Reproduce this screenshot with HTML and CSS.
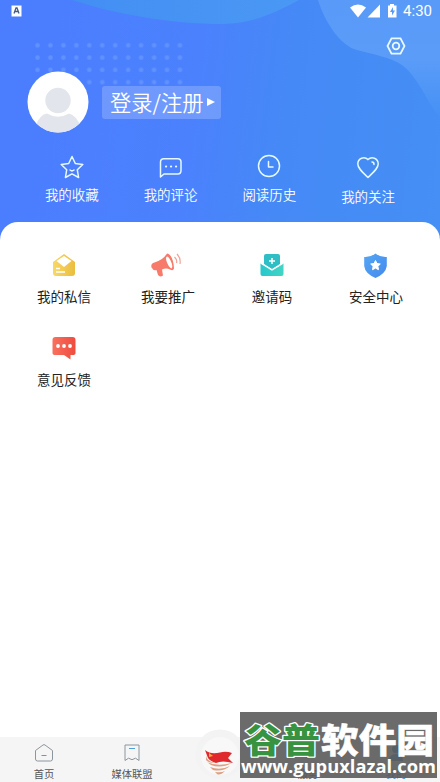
FILE: index.html
```html
<!DOCTYPE html>
<html lang="zh-CN">
<head>
<meta charset="utf-8">
<title>我的</title>
<link rel="stylesheet" href="styles.css">
</head>
<body>
<div class="app">
  <header class="hero">
    <svg class="hero-bg" width="440" height="240" viewBox="0 0 440 240">
      <defs>
        <linearGradient id="wave1" x1="0" x2="1"><stop offset="0" stop-color="#438ef3"/><stop offset="1" stop-color="#4a98f5"/></linearGradient>
        <linearGradient id="wave2" x1="0" y1="0" x2="0" y2="1"><stop offset="0" stop-color="#599af8"/><stop offset=".5" stop-color="#5a9cf8"/><stop offset="1" stop-color="#4590f5"/></linearGradient>
        <pattern id="dots" x="31" y="39" width="12.95" height="12.3" patternUnits="userSpaceOnUse"><circle cx="6.5" cy="6.3" r="2.3" fill="#6c9bff" fill-opacity=".65"/></pattern>
      </defs>
      <path d="M72 0C115 14 170 24 222 24C255 23 274 13 299 0Z" fill="url(#wave1)"/>
      <path d="M318 0C325 23 341 46 357 50C375 55 390 57 402 65C418 77 427 101 440 119V0Z" fill="url(#wave2)"/>
      <rect x="31" y="39" width="155" height="49" fill="url(#dots)"/>
    </svg>
    <div class="status">
      <svg width="11" height="12" viewBox="0 0 11 12"><path d="M.5.5h10v11H.5z" fill="#fff"/><path d="M3 8.500 5 3h1l2 5.500M4 6.500h3" fill="none" stroke="#465a85" stroke-width="1.300"/></svg>
      <div class="status-right">
        <svg width="48" height="14" viewBox="0 0 48 14" fill="#fff"><path d="M0 3.500Q8-2.500 16 3.500L8 13.500Z"/><path d="M30 .5V13.500H17.500Z"/><path fill-rule="evenodd" d="M38 1.500h2V0h4v1.500h2.500v12H38ZM43 3l-3 5h2v3.500l3-5h-2Z"/></svg>
        <span>4:30</span>
      </div>
    </div>
    <svg class="settings" width="20" height="20" viewBox="0 0 20 20" fill="none" stroke="#e9faff" stroke-width="1.800"><path d="M5.500 2.300h9L18.500 10l-4 7.700h-9L1.500 10Z"/><circle cx="10" cy="10" r="3.300"/></svg>
    <div class="profile">
      <svg class="avatar" width="62" height="62" viewBox="0 0 62 62"><defs><clipPath id="face"><circle cx="31" cy="31" r="30.500"/></clipPath></defs><circle cx="31" cy="31" r="30.500" fill="#fff"/><g clip-path="url(#face)" fill="#e2e5ec"><circle cx="31" cy="29.500" r="12.700"/><path d="M8 56Q13 43 20 42.500Q31 49 42 42.500Q49 44 54 56V62H8Z"/></g></svg>
      <div class="login"><span>登录/注册</span><i></i></div>
    </div>
    <nav class="quick">
      <div><svg width="26" height="26" viewBox="0 0 26 26"><path d="m13 2.500 3.300 7 7.500 1-5.500 5.300 1.300 7.700-6.600-3.700-6.600 3.700 1.300-7.700L2.200 10.500l7.500-1Z"/><path d="M11 16q2 1.800 4 0"/></svg><span>我的收藏</span></div>
      <div><svg width="26" height="26" viewBox="0 0 26 26"><path d="M2.500 23V8q0-3.300 3.300-3.300h14q3.200 0 3.200 3.300v8.500q0 3.500-3.200 3.500H6Z"/><path d="M8 12.500h.1m4.900 0h.1m4.900 0h.1" stroke-width="2.200"/></svg><span>我的评论</span></div>
      <div><svg width="26" height="26" viewBox="0 0 26 26"><circle cx="13" cy="12" r="10.500"/><path d="M12.500 7.500v5.500h4.500"/></svg><span>阅读历史</span></div>
      <div class="low"><svg width="26" height="26" viewBox="0 0 26 26"><path d="M13 5.600C9.500 2 2.800 4 2.800 10c0 4 4 7.500 10.200 13.500C19.200 17.500 23.200 14 23.200 10 23.200 4 16.500 2 13 5.600Z"/><path d="M17 8q2 0 2 2.500"/></svg><span>我的关注</span></div>
    </nav>
  </header>
  <main class="panel">
    <div class="item"><svg width="28" height="28" viewBox="0 0 28 28"><defs><linearGradient id="gold"><stop stop-color="#f8d866"/><stop offset="1" stop-color="#eabd3f"/></linearGradient></defs><path d="M3 11 14 3l11 8v11q0 3-3 3H6q-3 0-3-3Z" fill="url(#gold)"/><path d="m6.500 10 7.500-5 7.500 5-7.500 6Z" fill="#fff"/><path d="M6 17.500h4M6 21h9" stroke="#fff" stroke-width="1.500"/></svg><span>我的私信</span></div>
    <div class="item"><svg class="horn" width="32" height="28" viewBox="0 0 32 28"><path fill-rule="evenodd" d="M17 2.500c4 0 7 8 7 15q-1 3-4 1-4-2-8 0l1 6q-3 2-5-.5L6.500 19q-3 1-5-2.500-1-4 3-5Q13 9 17 2.500Zm0 3q-2 1 0 6t4.500 6q2-2-1-8-2-4-3.500-4Z" fill="#f77b6b"/><path d="M24.500 6q3 3 2 6M27 3q4 4 3 10" fill="none" stroke="#f4a197" stroke-width="1.200"/></svg><span>我要推广</span></div>
    <div class="item"><svg width="28" height="28" viewBox="0 0 28 28"><defs><linearGradient id="teal"><stop stop-color="#27c7cd"/><stop offset="1" stop-color="#43d5c5"/></linearGradient></defs><path d="M6 5q0-2 2-2h12q2 0 2 2v8l-8 5-8-5Z" fill="#2ebec3"/><path d="M2.500 12 14 19l11.500-7v11q0 2-2 2h-19q-2 0-2-2Z" fill="url(#teal)"/><path d="m2.500 12 11.500 7 11.500-7" fill="none" stroke="#fff" stroke-width="1.300"/><path d="M14 7v6m-3-3h6" stroke="#fff" stroke-width="1.500"/></svg><span>邀请码</span></div>
    <div class="item"><svg width="28" height="28" viewBox="0 0 28 28"><defs><linearGradient id="shield" x1="0" y1="0" x2="1" y2="1"><stop stop-color="#53a7f5"/><stop offset="1" stop-color="#4589ed"/></linearGradient></defs><path d="M13.500 2.500q5 4 11.300 3.500v9q-1 7.500-11.300 12Q3 22.500 2.200 15V6q6 .5 11.300-3.500Z" fill="url(#shield)"/><path d="m13.500 9.500 1.500 3 3.300.5-2.400 2.300.6 3.400-3-1.600-3 1.600.6-3.400-2.400-2.300 3.300-.5Z" fill="#fff" stroke="#fff" stroke-linejoin="round"/></svg><span>安全中心</span></div>
    <div class="item"><svg width="28" height="28" viewBox="0 0 28 28"><defs><linearGradient id="coral"><stop stop-color="#f9705f"/><stop offset="1" stop-color="#ef4c3e"/></linearGradient></defs><path d="M2.500 6q0-3 3-3h17q3 0 3 3v13q0 2-3 2h-2v4.500L14 21H5.500q-3 0-3-2Z" fill="url(#coral)"/><g fill="#fff"><circle cx="8" cy="12" r="1.900"/><circle cx="14" cy="12" r="1.900"/><circle cx="20" cy="12" r="1.900"/></g></svg><span>意见反馈</span></div>
  </main>
  <footer class="tabs">
    <div><svg width="20" height="20" viewBox="0 0 20 20"><path d="M1.500 7.500 9 2q1-.7 2 0l7.500 5.500V16q0 2-2 2h-13q-2 0-2-2Z"/><path class="accent" d="M7.500 12.500h5"/></svg><span>首页</span></div>
    <div><svg width="20" height="20" viewBox="0 0 20 20"><path d="M3 2h14v15.500l-3.500-2.300-3.500 1.500-3.500-1.500L3 17.500Z"/><path class="accent" d="M7 5.500h6"/></svg><span>媒体联盟</span></div>
    <div class="center"><svg width="50" height="54" viewBox="0 0 50 54"><circle cx="25" cy="25" r="24.500" fill="#f3f3f3"/><circle cx="25" cy="27" r="19" fill="#f8f8f8"/><path d="M10 21q6 5 15 2.500 6-1.700 12 .5l-4 5 5 5q-11-3-17 0-6-2-8-5Z" fill="#df292c"/><path d="m14 24 4 3-4 1Z" fill="#f4b33e"/><path d="M11 26q0 6 9 8-7 0-9-3Zm1 7q10 5 25 1-11 6-21 2Zm3 5q10 4 20-1-7 6-17 4Zm5 5q6 1 10-1-5 5-8 3Z" fill="#dda081"/></svg></div>
    <div><svg width="20" height="20" viewBox="0 0 20 20"><path d="m3 9 7-7 7 7-7 7Z"/></svg><span>服务</span></div>
    <div class="active"><svg width="20" height="20" viewBox="0 0 20 20"><circle cx="10" cy="6" r="4"/><path d="M3 18q0-7 7-7t7 7Z"/></svg><span>我的</span></div>
  </footer>
  <div class="mark">
    <svg class="mark-title" width="197" height="48" viewBox="0 0 197 48"><text x="4" y="41" textLength="76" lengthAdjust="spacingAndGlyphs" class="green">谷普</text><text x="81" y="41" textLength="113" lengthAdjust="spacingAndGlyphs" class="white">软件园</text></svg>
    <svg class="mark-url" width="197" height="26" viewBox="0 0 197 26"><text x="1" y="20" textLength="195" lengthAdjust="spacingAndGlyphs">www.gupuxlazal.com</text></svg>
  </div>
</div>
</body>
</html>
```
FILE: styles.css
```css
* { box-sizing: border-box; }
body { margin: 0; background: #fff; font-family: "Noto Sans CJK SC", sans-serif; }
svg { display: block; flex: none; }
.app { position: relative; width: 440px; height: 782px; display: flex; flex-direction: column; overflow: hidden; }
.hero { position: relative; height: 240px; flex: none; background: linear-gradient(97deg, #4b7dff 0%, #4b81fd 44%, #4589f6 64%, #458ff5 100%); color: #fff; }
.hero-bg { position: absolute; inset: 0; }
.status { position: relative; height: 22px; padding: 0 8px 0 11px; display: flex; align-items: center; justify-content: space-between; }
.status-right { display: flex; align-items: center; gap: 5px; font: 400 15px/22px Roboto, sans-serif; }
.settings { position: relative; margin: 14px 0 0 386px; }
.profile { position: relative; margin: 15px 0 0 27px; display: flex; align-items: center; gap: 13px; }
.login { height: 33px; width: 119px; padding: 0 6px 1px 8px; border-radius: 3px; background: rgba(255,255,255,.2); display: flex; align-items: center; justify-content: space-between; font-size: 21.3px; font-weight: 350; line-height: 32px; white-space: nowrap; }
.login i { border-left: 8px solid #fff; border-top: 4px solid transparent; border-bottom: 4px solid transparent; }
.quick { position: relative; margin: 21px 22.500px 0; display: grid; grid-template-columns: repeat(4, 1fr); }
.quick div { display: flex; flex-direction: column; align-items: center; gap: 4px; font-size: 13.500px; font-weight: 350; line-height: 20px; }
.quick .low { gap: 6px; }
.quick svg { fill: none; stroke: #e4faff; stroke-width: 1.500; stroke-linejoin: round; stroke-linecap: round; }
.panel { position: relative; z-index: 1; flex: 1; margin-top: -18px; padding: 29px 12px; border-radius: 18px 18px 0 0; background: #fff; display: grid; grid-template-columns: repeat(4, 1fr); grid-auto-rows: 83px; align-content: start; }
.item { display: flex; flex-direction: column; align-items: center; gap: 6px; color: #222; font-size: 13.500px; line-height: 22px; }
.item .horn { margin-right: 5px; }
.tabs { position: relative; z-index: 2; height: 45px; flex: none; background: #f5f5f5; display: grid; grid-template-columns: repeat(5, 1fr); font-size: 10.300px; line-height: 14px; color: #555; }
.tabs div { display: flex; flex-direction: column; align-items: center; padding-top: 6px; gap: 4px; }
.tabs svg { fill: none; stroke: #8c969e; }
.tabs .center svg { margin-top: -14px; stroke: none; }
.tabs .accent { stroke: #4e9edb; }
.tabs .active { color: #3389d4; }
.tabs .active svg { fill: #3389d4; stroke: none; }
.mark { position: absolute; z-index: 3; left: 240px; top: 712px; width: 197px; height: 66px; background: rgba(91,91,91,.9); }
.mark-title text { font: 900 34px "Noto Sans CJK SC", sans-serif; stroke: #fff; paint-order: stroke; stroke-linejoin: round; }
.mark-title .green { fill: #379340; stroke-width: 2.500px; }
.mark-title .white { fill: #fff; stroke-width: .5px; }
.mark-url { margin-top: -7px; }
.mark-url text { font: 700 18.500px "Open Sans", sans-serif; fill: #fff; }
```
